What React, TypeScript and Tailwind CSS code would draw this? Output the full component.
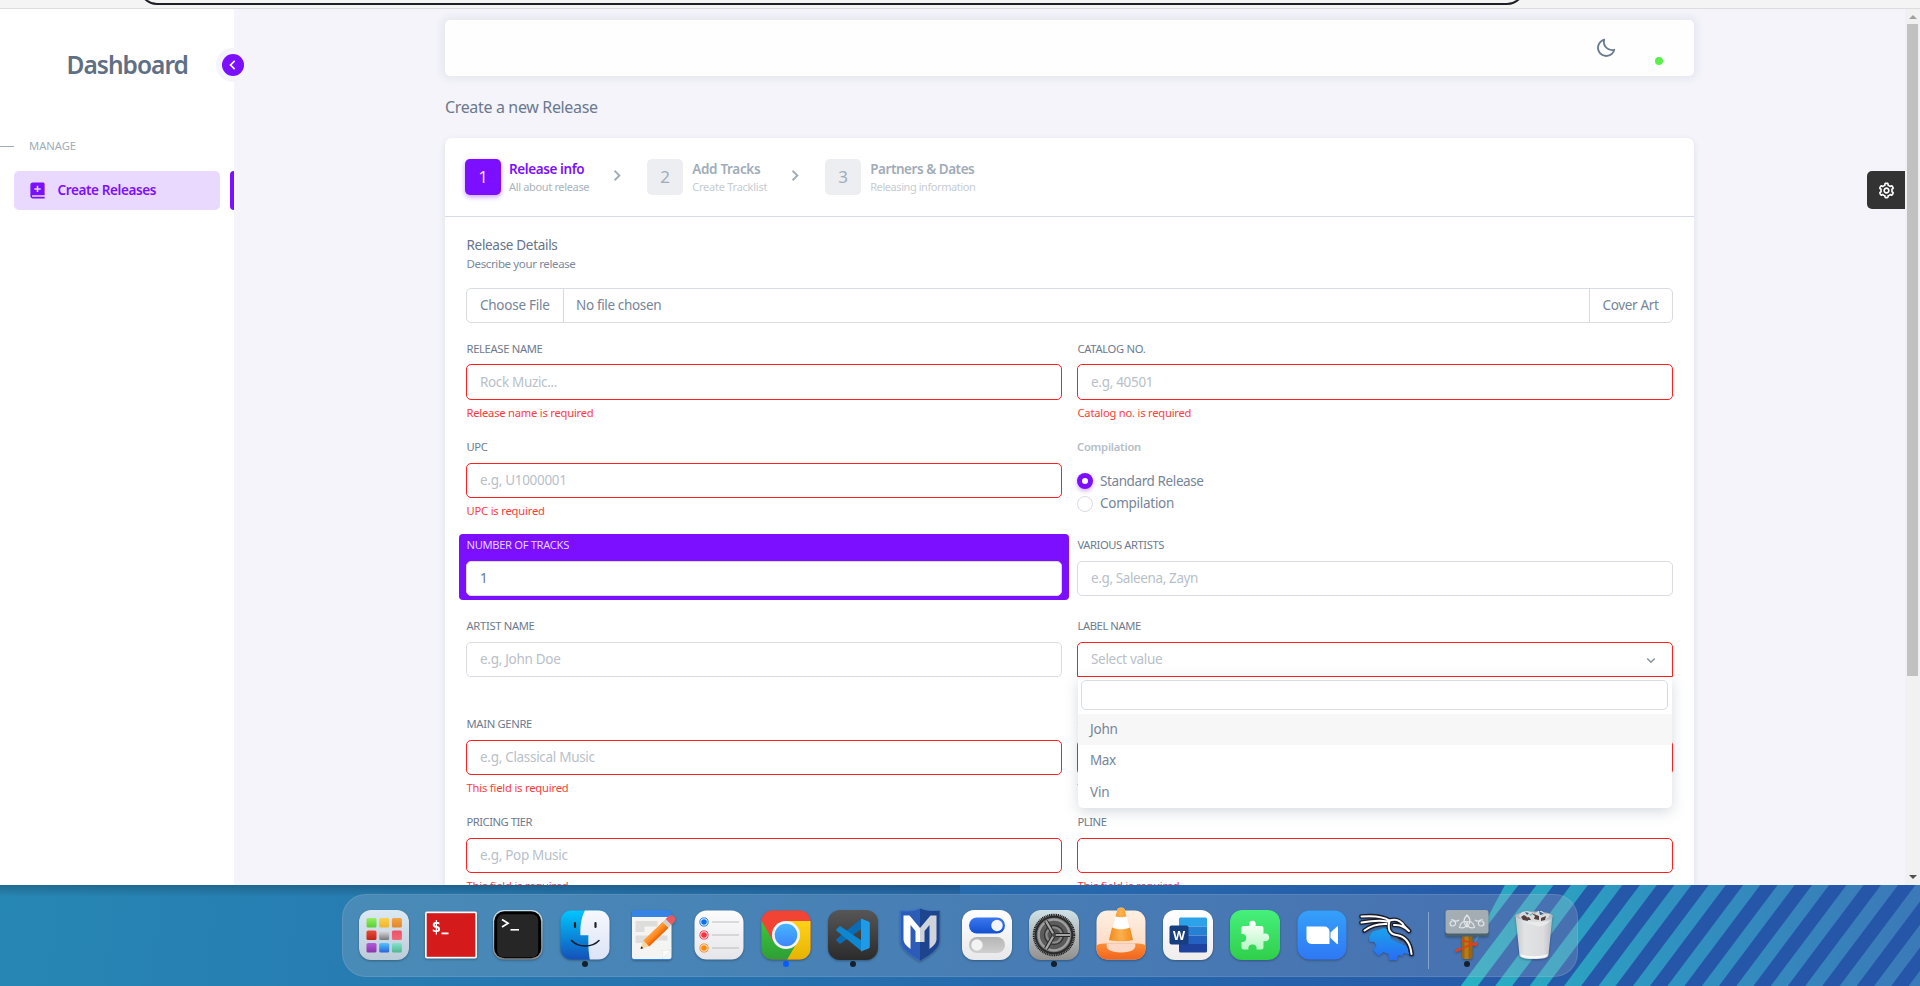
import React from "react";
import {
  BiMoon,
  BiCog,
  BiChevronRight,
  BiChevronLeft,
  BiChevronDown,
  BiSolidBookAdd,
} from "react-icons/bi";

/* ---------- Form pieces ---------- */

type FieldProps = {
  label: string;
  labelClass?: string;
  placeholder?: string;
  placeholderClass?: string;
  value?: string;
  error?: string;
  errorClass?: string;
  invalid?: boolean;
  tall?: boolean;
  highlight?: boolean;
  open?: boolean;
  children?: React.ReactNode;
};

function Field({
  label,
  labelClass = "tracking-[-0.31px]",
  placeholder,
  placeholderClass = "tracking-[-0.3px]",
  value,
  error,
  errorClass = "tracking-[-0.19px]",
  invalid,
  tall,
  highlight,
  open,
  children,
}: FieldProps) {
  return (
    <div
      className={
        highlight
          ? "-mx-[7px] -mt-[3px] h-[66px] w-[610px] shrink-0 rounded-[4px] bg-[#7c0fff] px-[7px] pt-[3px]"
          : "relative w-[596px] shrink-0"
      }
    >
      <div
        className={`h-4 pl-[0.5px] text-[11.2px] leading-[15px] ${labelClass} ${highlight ? "text-[#e5d2ff]" : "text-[#6d7b90]"}`}
      >
        {label}
      </div>
      <div
        className={`flex w-full items-center justify-between border bg-white px-[13px] text-[13.5px] ${
          tall ? "mt-[7px] h-9" : "mt-2 h-[35px]"
        } ${invalid ? "border-[#ff1f1f]" : "border-[#d9dbe3]"} ${open ? "rounded-t-[5px]" : "rounded-[5px]"}`}
      >
        {value ? (
          <span className="text-[#697a8d]">{value}</span>
        ) : (
          <span className={`text-[#b8bfc9] ${placeholderClass}`}>{placeholder}</span>
        )}
        {open && <BiChevronDown className="-mr-[1px] size-[18px] text-[#8592a3]" />}
      </div>
      {error && (
        <div className={`mt-[5px] h-4 pl-[0.5px] text-[11.2px] leading-[15px] text-[#ff3a3a] ${errorClass}`}>
          {error}
        </div>
      )}
      {children}
    </div>
  );
}

function Dropdown() {
  return (
    <div className="absolute left-px top-[59px] z-10 h-[131px] w-[594px] rounded-b-[5px] bg-white pt-[3px] text-[13.5px] text-[#76859a] shadow-[0_4px_14px_rgba(67,89,113,0.22)]">
      <div className="mx-[3px] h-[30px] w-[587px] rounded-[5px] border border-[#d9dbe3] bg-white" />
      <div className="mt-1 h-[31px] bg-[#f7f7f7] pl-[12px] leading-[30px] tracking-[-0.2px]">John</div>
      <div className="h-[31px] pl-[12px] leading-[30px] tracking-[-0.4px]">Max</div>
      <div className="h-[31px] pl-[12px] leading-[32px] tracking-[-0.2px]">Vin</div>
    </div>
  );
}

type StepProps = {
  n: string;
  title: string;
  titleClass: string;
  sub: string;
  subClass: string;
  active?: boolean;
};

function Step({ n, title, titleClass, sub, subClass, active }: StepProps) {
  return (
    <div className={active ? "flex gap-[8px]" : "flex gap-[9px]"}>
      <div
        className={`flex size-9 items-center justify-center rounded-[5px] text-[17px] ${
          active
            ? "bg-[#7c0fff] text-[#e9dbff] shadow-[0_2px_5px_rgba(124,15,255,0.4)]"
            : "bg-[#eceef1] text-[#a1acb8]"
        }`}
      >
        {n}
      </div>
      <div className="whitespace-nowrap">
        <div
          className={`h-[19px] text-[13.5px] font-semibold leading-[21px] ${titleClass} ${
            active ? "text-[#7c0fff]" : "text-[#a1acb8]"
          }`}
        >
          {title}
        </div>
        <div
          className={`h-4 text-[11px] leading-[17px] ${subClass} ${active ? "text-[#a9b3be]" : "text-[#c6ccd3]"}`}
        >
          {sub}
        </div>
      </div>
    </div>
  );
}

/* ---------- Dock icons (50 x 50 artwork) ---------- */

function Art({ children }: { children: React.ReactNode }) {
  return (
    <svg viewBox="0 0 50 50" className="size-[50px] overflow-visible drop-shadow-[0_1px_1px_rgba(0,0,0,0.3)]">
      {children}
    </svg>
  );
}

function Grad({ id, a, b }: { id: string; a: string; b: string }) {
  return (
    <linearGradient id={id} x1="0" y1="0" x2="0" y2="1">
      <stop offset="0" stopColor={a} />
      <stop offset="1" stopColor={b} />
    </linearGradient>
  );
}

const launcherTiles: [string, string][] = [
  ["#97ee62", "#58cf36"],
  ["#f8d14b", "#f0b52c"],
  ["#f2a543", "#e2852c"],
  ["#e94c38", "#bf2416"],
  ["#dfe1e4", "#76797d"],
  ["#ee5068", "#ef6a78"],
  ["#b45ad8", "#8a35ac"],
  ["#4fc4fb", "#2a62d8"],
  ["#83e3cf", "#52b68f"],
];

function Launcher() {
  return (
    <Art>
      <defs>
        <Grad id="la" a="#dbe9f3" b="#bccbd8" />
        {launcherTiles.map(([a, b], i) => (
          <Grad key={i} id={`lt${i}`} a={a} b={b} />
        ))}
      </defs>
      <rect width="50" height="50" rx="12" fill="url(#la)" />
      {launcherTiles.map((_, i) => (
        <rect
          key={i}
          x={7.5 + (i % 3) * 12.7}
          y={8 + Math.floor(i / 3) * 12.5}
          width="10"
          height="9.5"
          rx="1.6"
          fill={`url(#lt${i})`}
        />
      ))}
    </Art>
  );
}

function RedTerminal() {
  return (
    <Art>
      <rect x="-1" y="1.5" width="52" height="47" rx="2" fill="#fff" />
      <rect x="0.7" y="3.2" width="48.6" height="43.6" fill="#d41a1a" />
      <text x="5.5" y="22" fill="#fff" fontSize="16" fontWeight="700" fontFamily="'DejaVu Sans Mono', monospace">
        $
      </text>
      <rect x="15.5" y="22.5" width="7" height="1.8" fill="#fff" />
    </Art>
  );
}

function BlackTerminal() {
  return (
    <Art>
      <defs>
        <Grad id="bt" a="#c9e2e8" b="#8d8785" />
      </defs>
      <rect x="0" y="0" width="49.5" height="49.5" rx="11" fill="url(#bt)" />
      <rect x="1.2" y="1.2" width="47" height="47" rx="10" fill="#000" />
      <rect x="4.2" y="4.2" width="41" height="43" rx="6" fill="#262626" />
      <path d="M9 9.5l6 3.700-6 3.700" fill="none" stroke="#fff" strokeWidth="1.8" />
      <rect x="17.5" y="19" width="8.5" height="1.6" fill="#fff" />
    </Art>
  );
}

function Finder() {
  return (
    <Art>
      <defs>
        <Grad id="fi" a="#00c8ff" b="#1450b8" />
        <Grad id="fr" a="#f6f8fc" b="#dbe4f6" />
        <clipPath id="fc">
          <rect x="0.5" y="0.5" width="49" height="49" rx="11" />
        </clipPath>
      </defs>
      <g clipPath="url(#fc)">
        <rect width="50" height="50" fill="url(#fi)" />
        <path d="M25 0C21 8 20 16 20.4 25.2h8c-.3 9 .1 17 1.500 25H50V0z" fill="url(#fr)" />
      </g>
      <path d="M15 13v4M35.500 13v4" stroke="#222" strokeWidth="2.2" strokeLinecap="round" />
      <path d="M11.500 30.500c7 7.300 20.500 7.300 27.500 0" fill="none" stroke="#181c28" strokeWidth="1.6" strokeLinecap="round" />
    </Art>
  );
}

function Editor() {
  return (
    <Art>
      <defs>
        <linearGradient id="pn" x1="0" y1="0" x2="0" y2="1">
          <stop offset="0" stopColor="#ffa348" />
          <stop offset="0.5" stopColor="#ff8a1e" />
          <stop offset="1" stopColor="#e66100" />
        </linearGradient>
      </defs>
      <rect x="5" y="0" width="39.500" height="50" rx="3" fill="#3584e4" />
      <path d="M5 7h39.500v40a2 2 0 0 1-2 2H7a2 2 0 0 1-2-2z" fill="#f4f4f3" />
      <path d="M8.500 11h22v5.500h-13v5.500h-9zM8.500 25.500h32v5h-13v2.500h-19z" fill="#dddddb" />
      <path d="M44.500 38.500l-9 10.500c1-5 .5-7.500-1-8.500 3 .8 7-.2 10-2z" fill="#fff" stroke="#ddd" strokeWidth=".5" />
      <g transform="translate(13.500 39) rotate(-44)">
        <path d="M0 0l8-4.200v8.400z" fill="#f5d7a5" />
        <path d="M0 0l2.600-1.400v2.800z" fill="#222" />
        <rect x="8" y="-4.200" width="27" height="8.400" fill="url(#pn)" />
        <rect x="35" y="-4.200" width="4" height="8.400" fill="#cfcfcf" />
        <path d="M39-4.200h3.500a4.200 4.200 0 0 1 0 8.400h-3.500z" fill="#e75a5f" />
      </g>
    </Art>
  );
}

function Reminders() {
  const rows: [number, string][] = [
    [12, "#0a72f0"],
    [25, "#ff2f3f"],
    [38, "#ff8a0a"],
  ];
  return (
    <Art>
      <defs>
        <Grad id="rm" a="#fcfcfd" b="#e6e6ea" />
      </defs>
      <rect x="0.500" y="0.500" width="49" height="49" rx="12" fill="url(#rm)" />
      {rows.map(([y, c]) => (
        <g key={y}>
          <circle cx="10" cy={y} r="4.100" fill="none" stroke={c} strokeWidth="0.9" />
          <circle cx="10" cy={y} r="2.800" fill={c} />
          <path d={`M18 ${y}h27`} stroke="#b5b5b8" strokeWidth="0.9" />
        </g>
      ))}
    </Art>
  );
}

function Chrome() {
  return (
    <Art>
      <defs>
        <Grad id="cb" a="#48b4ff" b="#3c86fa" />
        <Grad id="cg" a="#3cc83c" b="#2e9e36" />
        <Grad id="cy" a="#ffd21a" b="#e6b400" />
        <clipPath id="cc">
          <rect x="0.500" y="0.500" width="49" height="49" rx="11" />
        </clipPath>
      </defs>
      <g clipPath="url(#cc)">
        <rect width="50" height="50" fill="#f24435" />
        <path d="M0 10l12 21 14 7 12-5-12 17H0z" fill="url(#cg)" />
        <path d="M25 11h25v39H26l12-21z" fill="url(#cy)" />
      </g>
      <circle cx="25" cy="25" r="14" fill="#f3f5f8" />
      <circle cx="25" cy="25" r="11.300" fill="url(#cb)" />
    </Art>
  );
}

function Code() {
  return (
    <Art>
      <defs>
        <Grad id="vc" a="#565656" b="#2b2b2b" />
      </defs>
      <rect width="50" height="50" rx="12" fill="url(#vc)" />
      <path d="M33.500 8.500v10.500L12 34l-3.500-3.200c-.5-.5-.5-1.200 0-1.700z" fill="#0a6cb4" />
      <path d="M33.500 41V30.500L12 16l-3.500 3c-.5.5-.5 1.200 0 1.700z" fill="#0f86d0" />
      <path d="M33 8.500l7.500 3c.8.400 1.300 1 1.300 2v23c0 1-.5 1.700-1.300 2L33 41.500z" fill="#1f9ae6" />
    </Art>
  );
}

function Shield() {
  return (
    <Art>
      <path d="M25-1.500c6 2.500 13 3 19.500 2.200V30c0 10-12 16-19.500 21-7.500-5-19.500-11-19.500-21V.7C12 1.500 19 1 25-1.500z" fill="#2a5cb8" stroke="#3f76d0" strokeWidth=".8" />
      <path d="M25-1.500c6 2.500 13 3 19.500 2.200V30c0 10-12 16-19.500 21z" fill="#1c458e" />
      <path d="M8.500 5.500h6L25 18v14h-4.500V21L15.500 15v24c-4-3-7-6-7-10z" fill="#fff" />
      <path d="M41.500 5.500h-6L25 18v14h4.500V21l5-6v24c4-3 7-6 7-10z" fill="#cfd3da" />
    </Art>
  );
}

function Tweaks() {
  return (
    <Art>
      <defs>
        <Grad id="tb" a="#3a78f0" b="#1350d0" />
        <Grad id="tg" a="#b5b5b5" b="#cfcfcf" />
        <Grad id="tw" a="#ffffff" b="#e8e8ea" />
      </defs>
      <rect width="50" height="50" rx="12" fill="url(#tw)" />
      <rect x="7" y="7.500" width="36" height="16" rx="8" fill="url(#tb)" />
      <circle cx="35" cy="15.500" r="5.700" fill="#f3f4f7" />
      <rect x="7" y="27" width="36" height="16" rx="8" fill="url(#tg)" />
      <circle cx="15" cy="35" r="5.700" fill="#f3f3f3" />
    </Art>
  );
}

function Settings() {
  return (
    <Art>
      <defs>
        <Grad id="sg" a="#cfe2e8" b="#92908e" />
      </defs>
      <rect width="50" height="50" rx="12" fill="url(#sg)" />
      <circle cx="25" cy="25" r="20.300" fill="#8b8b8b" stroke="#1e1e1e" strokeWidth="2" strokeDasharray="1.100 .7" />
      <circle cx="25" cy="25" r="18.300" fill="#6f6f6f" stroke="#2a2a2a" strokeWidth="2" />
      <circle cx="25" cy="25" r="15.300" fill="#5b5b5b" stroke="#a0a0a0" strokeWidth="2.200" />
      <circle cx="25" cy="25" r="9.500" fill="#8a8a8a" stroke="#333" strokeWidth="1.400" />
      <circle cx="25" cy="25" r="6.500" fill="#565656" />
      <g stroke="#262626" strokeWidth="4.200">
        <path d="M25 25h16M25 25l-8-13.900M25 25l-8 13.900" />
      </g>
      <g stroke="#a5a5a5" strokeWidth="2.200">
        <path d="M25 25h16M25 25l-8-13.900M25 25l-8 13.900" />
      </g>
      <circle cx="25" cy="25" r="2" fill="#4a4a4a" />
    </Art>
  );
}

function Cone() {
  return (
    <Art>
      <defs>
        <Grad id="vb" a="#fff0e2" b="#fbd3bb" />
        <Grad id="vo" a="#fb8d35" b="#f2641c" />
        <linearGradient id="vk" x1="0" x2="1">
          <stop offset="0" stopColor="#ef8a1c" />
          <stop offset=".5" stopColor="#ffb04e" />
          <stop offset="1" stopColor="#ef8a1c" />
        </linearGradient>
      </defs>
      <rect x="0.500" y="0.500" width="49" height="49" rx="11" fill="url(#vb)" />
      <path d="M.5 35.500C3 33.500 7 33.500 12 33.500h26c5 0 9 0 11.500 2V39a10.500 10.500 0 0 1-10.500 10.500H11A10.500 10.500 0 0 1 .5 39z" fill="url(#vo)" />
      <path d="M11 33.500h28c2 5-3 9-14 9s-16-4-14-9z" fill="#fbd9c6" />
      <path d="M21.500-1c1-1.800 6-1.800 7 0L36.500 30c-4 1.600-19 1.600-23 0z" fill="#fff" />
      <path d="M21.500-1c1-1.800 6-1.800 7 0l2 7.500c-3 1-8 1-11 0zM16 17.500c5 2.400 13 2.400 18 0L37 30c-4 1.700-20 1.700-24 0z" fill="url(#vk)" />
    </Art>
  );
}

function Word() {
  return (
    <Art>
      <defs>
        <Grad id="ww" a="#ffffff" b="#efedec" />
      </defs>
      <rect width="50" height="50" rx="12" fill="url(#ww)" />
      <path d="M17.500 7.500h25a1.500 1.500 0 0 1 1.500 1.500v7.500H16V9a1.500 1.500 0 0 1 1.500-1.500z" fill="#2ba2ea" />
      <path d="M16 16.500h28v9H16z" fill="#2681d4" />
      <path d="M16 25.500h28v8.500H16z" fill="#2461c0" />
      <path d="M16 34h28v7a1.500 1.500 0 0 1-1.500 1.500h-25A1.500 1.500 0 0 1 16 41z" fill="#1f429f" />
      <rect x="6.500" y="15.500" width="19" height="19" rx="2" fill="#173f80" />
      <text x="16" y="29.500" textAnchor="middle" fill="#fff" fontSize="12.500" fontWeight="700" fontFamily="'Open Sans', sans-serif">
        W
      </text>
    </Art>
  );
}

function Extensions() {
  return (
    <Art>
      <defs>
        <Grad id="eg" a="#46f07c" b="#2fcf4a" />
        <Grad id="ep" a="#ffffff" b="#b8f7c4" />
      </defs>
      <rect width="50" height="50" rx="12" fill="url(#eg)" />
      <path
        d="M13.500 16h6c-1-3 .5-5.200 3-5.200s4 2.200 3 5.200h6a2 2 0 0 1 2 2v6c3-1.200 5.700.5 5.700 3.500s-2.700 4.500-5.700 3.500v6.500a2 2 0 0 1-2 2h-5c.6-3.200-1-5-4-5s-4.600 1.800-4 5h-5a2 2 0 0 1-2-2v-5.500c3 .4 4.800-1.200 4.800-4s-1.800-4.300-4.800-4V18a2 2 0 0 1 2-2z"
        fill="url(#ep)"
      />
    </Art>
  );
}

function Meet() {
  return (
    <Art>
      <defs>
        <Grad id="zg" a="#35a0fa" b="#2f78f4" />
      </defs>
      <rect x="0.500" y="0.500" width="49" height="49" rx="12" fill="url(#zg)" />
      <path d="M9.500 16.500h18a5 5 0 0 1 5 5v12.500h-18a5 5 0 0 1-5-5z" fill="#fff" />
      <path d="M33.500 22.500l6.500-6c.5-.3 1-.1 1 .6v16.300c0 .7-.5.900-1 .6l-6.500-6z" fill="#fff" />
    </Art>
  );
}

function Dragon() {
  return (
    <Art>
      <defs>
        <Grad id="kg" a="#19a3ea" b="#2a6cf6" />
      </defs>
      <path
        d="M5 27l3-5 12-4 5 2 2 9 8 4 7 3 4 6-1 2-5-1-2 3-4-1-1 5h-8l-.5-6-5-2-5 4-5.500-6 3.500-4-2-4-5-.5z"
        fill="url(#kg)"
      />
      <g fill="none" strokeLinecap="round" strokeLinejoin="round">
        <g stroke="#1c1c28" strokeWidth="4.600">
          <path d="M-2.500 6.500c12-1 21-.5 28 4M-2.500 12.500c9-1.500 18-2.500 26-1M.5 20.500c6-4.500 13-7 22-6.500M25.500 10.500c-2 9 0 13.500 7 14.500s13.500 5 15 19" />
          <path d="M25.500 10.500c7-2 12 1 14.500 5.500l5 5M30 15c5-.5 11 2 15 6M36 27c6 1 10 6 11.500 17" />
        </g>
        <g stroke="#fff" strokeWidth="2">
          <path d="M-2.500 6.500c12-1 21-.5 28 4M-2.500 12.500c9-1.500 18-2.500 26-1M.5 20.500c6-4.500 13-7 22-6.500M25.500 10.500c-2 9 0 13.500 7 14.500s13.500 5 15 19" />
          <path d="M25.500 10.500c7-2 12 1 14.500 5.500l5 5M30 15c5-.5 11 2 15 6" />
        </g>
      </g>
    </Art>
  );
}

function Hammer() {
  return (
    <Art>
      <rect x="20" y="24" width="10.500" height="25" rx="2.500" fill="#9a650f" />
      <rect x="22.500" y="24" width="4" height="25" fill="#b67c1c" />
      <path d="M3.500 21h43v3.500a2 2 0 0 1-2 2h-39a2 2 0 0 1-2-2z" fill="#4b626e" />
      <rect x="3.500" y="0" width="43" height="23.500" rx="2.500" fill="#a5adb4" />
      <g fill="none" stroke="#e1e5e8" strokeWidth="1.200">
        <path d="M25 5c-4 4-4 8 0 12 4-4 4-8 0-12zM17.500 17.500c1-5 4-7 8.500-5.500-1 5-4 6.500-8.500 5.500zM32.500 17.500c-1-5-4-7-8.500-5.500 1 5 4 6.500 8.500 5.500z" />
        <path d="M17 10c-2 2-4 1-6 1M9 10c5-1 6 5.500 2.300 6-4 .3-4.300-4.500-1-4.500M33 10c2 2 4 1 6 1M41 10c-5-1-6 5.500-2.300 6 4 .3 4.300-4.500 1-4.500" />
      </g>
      <path d="M19 29l12.500 4 4-.8-1 4-5-1-12 5.500-4.500 2 1.500-4 5-.5 9-5-9.500-2z" fill="#e2401a" />
    </Art>
  );
}

function Trash() {
  return (
    <Art>
      <defs>
        <linearGradient id="tr" x1="0" x2="1">
          <stop offset="0" stopColor="#c4c7cb" />
          <stop offset=".25" stopColor="#e2e3e5" />
          <stop offset=".75" stopColor="#dcdcdf" />
          <stop offset="1" stopColor="#b9bdc2" />
        </linearGradient>
      </defs>
      <path d="M6.500 5.500h37L39.500 45c-.5 3-5 4-14.500 4s-14-1-14.500-4z" fill="url(#tr)" />
      <ellipse cx="25" cy="6" rx="18.500" ry="4.500" fill="#b3bac0" />
      <path d="M10 6l3-4 5-1 4 1 4 2 3-3 4 0 3 3 5 0-2 4-6 3-14 0-7-2z" fill="#d9dbdd" />
      <path d="M12 7l3-2 3 2 1 4-5-1zM22 3l4 3-1 3 5 1 0-4zM32 8l5-2-1 4-4 1zM17 8l3-1 2 3-4 0z" fill="#54403f" />
      <path d="M16 2l4 1-2 2zM30 1l5 3-4 1z" fill="#3a5c88" />
      <path d="M20 4l3 0-1 2z" fill="#4cc9a8" />
      <path d="M8 10c8 3 26 3 34 0l-4 4c-6 3-10 3-13 1" fill="#eeeeef" opacity=".8" />
      <path d="M11.500 44c6 3 21 3 27 0l-.5 2c-3 3-23 3-26 0z" fill="#fff" opacity=".8" />
    </Art>
  );
}

const dockApps: [() => React.JSX.Element, string][] = [
  [Launcher, ""],
  [RedTerminal, ""],
  [BlackTerminal, ""],
  [Finder, "bg-[#14202c]"],
  [Editor, ""],
  [Reminders, ""],
  [Chrome, "bg-[#0a5cff]"],
  [Code, "bg-[#14202c]"],
  [Shield, ""],
  [Tweaks, ""],
  [Settings, "bg-[#14202c]"],
  [Cone, ""],
  [Word, ""],
  [Extensions, ""],
  [Meet, ""],
  [Dragon, ""],
];

function DockItem({ icon: Icon, dot }: { icon: () => React.JSX.Element; dot: string }) {
  return (
    <div className="flex w-[67px] flex-col items-center pt-[14.500px]">
      <Icon />
      {dot && <div className={`mt-[1.500px] size-[6px] rounded-full ${dot}`} />}
    </div>
  );
}

const stripes = Array.from({ length: 20 }, (_, k) => k);

function Wallpaper() {
  return (
    <svg viewBox="0 0 1920 101" className="absolute inset-0 h-[101px] w-[1920px]">
      <defs>
        <linearGradient id="wp" gradientUnits="userSpaceOnUse" x1="0" y1="0" x2="1640" y2="260">
          <stop offset="0" stopColor="#2787b4" />
          <stop offset=".5" stopColor="#266fae" />
          <stop offset="1" stopColor="#2556a8" />
        </linearGradient>
        <linearGradient id="st" gradientUnits="userSpaceOnUse" x1="1460" y1="101" x2="1900" y2="-10">
          <stop offset="0" stopColor="#27b3c3" />
          <stop offset=".45" stopColor="#2f93c0" />
          <stop offset="1" stopColor="#3b79b8" />
        </linearGradient>
      </defs>
      <rect width="1920" height="101" fill="url(#wp)" />
      <path d="M1505 0h13.500L1474 58z" fill="url(#st)" />
      {stripes.map((k) => {
        const top = 1536.500 + 34.450 * k;
        const bottom = 1460.700 + 34.450 * k;
        return <path key={k} d={`M${top} 0h17L${bottom + 17} 101h-17z`} fill="url(#st)" />;
      })}
    </svg>
  );
}

/* ---------- Page ---------- */

function Sidebar() {
  return (
    <aside className="relative flex w-[234px] shrink-0 flex-col bg-white">
      <div className="mt-[36px] h-[41px] pl-[66.500px] text-[24.500px] font-semibold leading-10 tracking-[-0.980px] text-[#5f6f85]">
        Dashboard
      </div>
      <div className="absolute left-[216px] top-[39px] z-10 flex size-[34px] items-center justify-center rounded-full bg-[#f4f4fa]">
        <div className="flex size-[22px] items-center justify-center rounded-full bg-[#7c0fff]">
          <BiChevronLeft className="size-[20px] text-white" />
        </div>
      </div>
      <div className="mt-[52px] flex h-4 items-center">
        <div className="h-px w-[14px] bg-[#a1acb8]" />
        <span className="ml-[15px] text-[11.200px] leading-4 text-[#a1acb8]">MANAGE</span>
      </div>
      <div className="mt-[17px] flex h-[39px] justify-between pl-[14px]">
        <div className="flex w-[206px] items-center rounded-[5px] bg-[#e9d9ff] pl-[14px] text-[#7c0fff]">
          <BiSolidBookAdd className="size-[19px]" />
          <span className="ml-[10.500px] text-[13.500px] font-semibold tracking-[-0.380px]">Create Releases</span>
        </div>
        <div className="w-1 rounded-l-[4px] bg-[#7c0fff]" />
      </div>
    </aside>
  );
}

function ReleaseForm() {
  return (
    <section className="h-[760px] w-[1249px] rounded-[7px] bg-white shadow-[0_2px_6px_rgba(67,89,113,0.12)]">
      <div className="flex h-[79px] border-b border-[#d9dbe3] pl-5 pt-[21px]">
        <Step n="1" title="Release info" titleClass="tracking-[-0.400px]" sub="All about release" subClass="tracking-[-0.340px]" active />
        <BiChevronRight className="ml-[16px] mt-[5px] size-[23px] text-[#a1acb8]" />
        <div className="ml-[19px]">
          <Step n="2" title="Add Tracks" titleClass="tracking-[-0.330px]" sub="Create Tracklist" subClass="tracking-[-0.240px]" />
        </div>
        <BiChevronRight className="ml-[16px] mt-[5px] size-[23px] text-[#a1acb8]" />
        <div className="ml-[19px]">
          <Step n="3" title="Partners & Dates" titleClass="tracking-[-0.460px]" sub="Releasing information" subClass="tracking-[-0.430px]" />
        </div>
      </div>
      <div className="px-[21px]">
        <div className="mt-[18px] h-5 pl-[0.500px] text-[13.500px] leading-5 tracking-[-0.310px] text-[#66758a]">Release Details</div>
        <div className="h-[18px] pl-[0.500px] text-[11.500px] leading-[17px] tracking-[-0.370px] text-[#7d8a9e]">Describe your release</div>
        <div className="mt-[15px] flex h-[35px] w-[1207px] items-center rounded-[5px] border border-[#d9dbe3] text-[13.500px] text-[#76859a]">
          <div className="flex h-full w-[97px] items-center border-r border-[#d9dbe3] pl-[13px] tracking-[-0.260px]">Choose File</div>
          <div className="flex-1 pl-3 tracking-[-0.350px]">No file chosen</div>
          <div className="flex h-full w-[83px] items-center border-l border-[#d9dbe3] pl-[12.500px] tracking-[-0.350px]">Cover Art</div>
        </div>
        <div className="mt-[18px] flex h-[98px] gap-[15px]">
          <Field label="RELEASE NAME" placeholder="Rock Muzic..." placeholderClass="tracking-[-0.350px]" error="Release name is required" errorClass="tracking-[-0.220px]" invalid tall />
          <Field label="CATALOG NO." placeholder="e.g, 40501" error="Catalog no. is required" errorClass="tracking-[-0.220px]" invalid tall />
        </div>
        <div className="flex h-[98px] gap-[15px]">
          <Field label="UPC" placeholder="e.g, U1000001" error="UPC is required" invalid />
          <div className="text-[13.500px] text-[#76859a]">
            <div className="h-4 text-[11.200px] font-semibold leading-[15px] tracking-[-0.220px] text-[#b6bec8]">Compilation</div>
            <div className="mt-[15px] flex h-[22px] items-center">
              <div className="flex size-4 items-center justify-center rounded-full bg-[#7c0fff] shadow-[0_2px_4px_rgba(124,15,255,0.35)]">
                <div className="size-[6px] rounded-full bg-white" />
              </div>
              <span className="ml-[7px] tracking-[-0.400px]">Standard Release</span>
            </div>
            <div className="flex h-[23px] items-center">
              <div className="mt-px size-4 rounded-full border border-[#d9dbe3] bg-white" />
              <span className="ml-[7px] tracking-[-0.270px]">Compilation</span>
            </div>
          </div>
        </div>
        <div className="flex h-[81px] gap-[15px]">
          <Field label="NUMBER OF TRACKS" labelClass="tracking-[-0.340px]" value="1" highlight />
          <Field label="VARIOUS ARTISTS" labelClass="tracking-[-0.420px]" placeholder="e.g, Saleena, Zayn" placeholderClass="tracking-[-0.380px]" />
        </div>
        <div className="flex h-[98px] gap-[15px]">
          <Field label="ARTIST NAME" placeholder="e.g, John Doe" />
          <Field label="LABEL NAME" labelClass="tracking-[-0.400px]" placeholder="Select value" error="Label name is required" invalid open>
            <Dropdown />
          </Field>
        </div>
        <div className="flex h-[98px] gap-[15px]">
          <Field label="MAIN GENRE" placeholder="e.g, Classical Music" error="This field is required" invalid />
          <Field label="SUB GENRE" error="This field is required" invalid />
        </div>
        <div className="flex h-[98px] gap-[15px]">
          <Field label="PRICING TIER" labelClass="tracking-[-0.470px]" placeholder="e.g, Pop Music" error="This field is required" invalid />
          <Field label="PLINE" labelClass="tracking-[-0.450px]" error="This field is required" invalid />
        </div>
      </div>
    </section>
  );
}

export default function App() {
  return (
    <div className="flex h-[986px] w-[1920px] flex-col overflow-hidden bg-[#266fae] font-['Noto_Sans',sans-serif]">
      <div className="relative h-[9px] shrink-0 overflow-hidden border-b border-[#dcdcdf] bg-[#f4f4f5]">
        <div className="absolute left-[139px] top-[-31px] h-[36px] w-[1386px] rounded-full border-2 border-[#1f1f26]" />
      </div>

      <div className="flex h-[876px] shrink-0 overflow-hidden bg-[#f4f4fa]">
        <Sidebar />
        <main className="flex flex-1 flex-col pl-[211px]">
          <div className="mt-[11px] flex h-14 w-[1249px] shrink-0 rounded-[5px] bg-[#fefeff] shadow-[0_0_9px_3px_rgba(67,70,130,0.08)]">
            <BiMoon className="ml-[1150px] mt-[17px] size-[22px] text-[#697a8d]" />
            <div className="ml-[38px] mt-[37px] size-2 rounded-full bg-[#5bf04a]" />
          </div>
          <h1 className="mb-[18px] mt-[19px] h-[25px] shrink-0 text-[16px] leading-[25px] tracking-[-0.350px] text-[#6b7990]">
            Create a new Release
          </h1>
          <ReleaseForm />
        </main>
        <div className="mt-[162px] flex h-[38px] w-[38px] items-center justify-center rounded-l-[5px] bg-[#333333]">
          <BiCog className="size-[19px] text-white" />
        </div>
        <div className="flex w-[15px] flex-col items-center bg-[#f1f1f2]">
          <div className="mt-[6px] size-0 border-x-[4px] border-b-[4px] border-x-transparent border-b-[#a0a0a0]" />
          <div className="mt-[5px] h-[652px] w-[11px] bg-[#c1c1c1]" />
          <div className="mt-auto mb-[6px] size-0 border-x-[4px] border-t-[4px] border-x-transparent border-t-[#505050]" />
        </div>
      </div>

      <div className="relative h-[101px] shrink-0 overflow-hidden">
        <Wallpaper />
        <div className="absolute left-0 top-0 h-3 w-[960px] bg-linear-to-b from-black/20 to-transparent" />
        <div className="relative ml-[342px] mt-[9px] flex h-[83px] w-[1236px] rounded-[24px] border border-white/10 bg-[#b0b8cc]/25 pl-[7px]">
          {dockApps.map(([icon, dot], i) => (
            <DockItem key={i} icon={icon} dot={dot} />
          ))}
          <div className="ml-[6px] mt-[17px] h-[57px] w-px bg-white/35" />
          <div className="ml-[4px] flex">
            <DockItem icon={Hammer} dot="bg-[#14202c]" />
            <DockItem icon={Trash} dot="" />
          </div>
        </div>
      </div>
    </div>
  );
}
